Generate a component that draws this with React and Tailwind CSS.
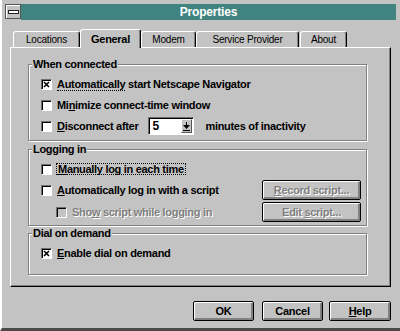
import React from 'react';

const font = "font-['Liberation_Sans',Arial,sans-serif]";
const body = 'text-[11px] font-bold tracking-[-0.3px] leading-[13px] text-black';
const grayText = 'text-[#808080] [text-shadow:1px_1px_0_#fff]';

const CheckBox = ({ checked, disabled }) => (
  <span
    className={`flex h-[11px] w-[11px] shrink-0 items-center justify-center border border-t-[#6f6f6f] border-l-[#6f6f6f] border-r-white border-b-white shadow-[inset_1px_1px_0_#000] ${
      disabled ? 'bg-[#c3c3c3]' : 'bg-white'
    }`}
  >
    {checked && (
      <svg width="7" height="7" viewBox="0 0 7 7">
        <path d="M1 1L6 6M6 1L1 6" stroke="#000" strokeWidth="1.6" />
      </svg>
    )}
  </span>
);

const Check = ({ checked, disabled, children }) => (
  <div className="flex items-center">
    <CheckBox checked={checked} disabled={disabled} />
    <span className={`ml-[5px] ${disabled ? grayText : ''}`}>{children}</span>
  </div>
);

const Group = ({ label, className, children }) => (
  <fieldset
    className={`ml-[17px] w-[339px] border border-[#808080] shadow-[inset_1px_1px_0_#fff,1px_1px_0_#fff] ${className}`}
  >
    <legend className="ml-[3px] bg-[#c3c3c3] px-[1px]">{label}</legend>
    {children}
  </fieldset>
);

const Tab = ({ label, active, className }) => (
  <div
    className={`flex items-center justify-center rounded-t-[3px] border-l border-t border-r border-l-white border-t-white border-r-black shadow-[inset_-1px_0_0_#808080] bg-[#c3c3c3] ${
      active
        ? 'relative z-10 h-[19px] text-[11px] font-bold tracking-[-0.3px]'
        : 'mb-[1px] h-[16px] text-[10px] font-normal tracking-[-0.2px]'
    } ${className}`}
  >
    {label}
  </div>
);

const PushButton = ({ children, disabled, className }) => (
  <div
    className={`flex items-center justify-center rounded-[2px] border border-black bg-[#c3c3c3] shadow-[inset_1px_1px_0_#fff,inset_-2px_-2px_0_#808080] ${
      disabled ? grayText : ''
    } ${className}`}
  >
    {children}
  </div>
);

export default function App() {
  return (
    <div className={`${font} ${body} h-[331px] w-[400px] overflow-hidden border-l-2 border-b-[3px] border-l-white border-b-[#4a4a4a] bg-[#c3c3c3] pt-[4px]`}>
      {/* title bar */}
      <div className="flex h-[16px]">
        <div className="ml-[3px] flex h-[15px] w-[16px] items-center justify-center border border-[#555] bg-[#c3c3c3] shadow-[inset_1px_1px_0_#fff]">
          <span className="h-[4px] w-[11px] border border-[#222] bg-white" />
        </div>
        <div className="flex w-[375px] items-center justify-center bg-[#408480] text-[12px] font-bold tracking-[-0.2px] text-white">
          Properties
        </div>
      </div>

      {/* tabs */}
      <div className="relative z-10 mt-[9px] -mb-px ml-[11px] flex h-[19px] items-end">
        <Tab label="Locations" className="w-[67px]" />
        <Tab label="General" active className="w-[61px]" />
        <Tab label="Modem" className="w-[55px]" />
        <Tab label="Service Provider" className="w-[103px]" />
        <Tab label="About" className="ml-[1px] w-[47px]" />
      </div>

      {/* panel */}
      <div className="ml-[8px] flex h-[240px] w-[381px] flex-col border border-l-white border-t-white border-r-black border-b-black shadow-[inset_-1px_-1px_0_#808080]">
        <Group label="When connected" className="mt-[10px] pt-[5px] pb-[6px]">
          <div className="flex flex-col gap-[5px] pl-[12px]">
            <div className="flex h-[16px] items-center">
              <CheckBox checked />
              <span className="ml-[5px]">
                <span className="border-b border-dotted border-black">Automatically</span> start Netscape Navigator
              </span>
            </div>
            <div className="flex h-[16px] items-center">
              <Check>
                Mi<u>n</u>imize connect-time window
              </Check>
            </div>
            <div className="flex h-[16px] items-center">
              <Check>
                <u>D</u>isconnect after
              </Check>
              <div className="ml-[10px] flex h-[18px] w-[46px] shrink-0 border border-t-[#6f6f6f] border-l-[#6f6f6f] border-r-white border-b-white bg-white shadow-[inset_1px_1px_0_#000]">
                <span className="flex-1 pl-[3px] pt-[2px] text-[12px]">5</span>
                <span className="my-[1px] mr-[1px] flex w-[11px] items-center justify-center border border-l-white border-t-white border-r-[#555] border-b-[#555] bg-[#c3c3c3]">
                  <svg width="7" height="9" viewBox="0 0 7 9">
                    <path d="M3 0h1v3h3L3.5 7 0 3h3z" fill="#000" />
                    <rect x="0" y="8" width="7" height="1" fill="#000" />
                  </svg>
                </span>
              </div>
              <span className="ml-[11px]">minutes of inactivity</span>
            </div>
          </div>
        </Group>

        <Group label="Logging in" className="mt-[2px] pt-[5px] pb-[3px]">
          <div className="flex flex-col pl-[12px] pr-[5px]">
            <div className="flex h-[16px] items-center">
              <CheckBox />
              <span className="ml-[4px] border border-dotted border-black px-[1px] leading-[10px]">
                <u>M</u>anually log in each time
              </span>
            </div>
            <div className="mt-[3px] flex h-[20px] items-center justify-between">
              <Check>
                <u>A</u>utomatically log in with a script
              </Check>
              <PushButton disabled className="h-[20px] w-[99px]">
                <span>
                  <u>R</u>ecord script...
                </span>
              </PushButton>
            </div>
            <div className="mt-[2px] flex h-[20px] items-center justify-between">
              <div className="ml-[15px]">
                <Check disabled>
                  Sho<u>w</u> script while logging in
                </Check>
              </div>
              <PushButton disabled className="h-[20px] w-[99px]">
                <span>
                  Edit <u>s</u>cript...
                </span>
              </PushButton>
            </div>
          </div>
        </Group>

        <Group label="Dial on demand" className="mt-[1px] pt-[5px] pb-[13px]">
          <div className="flex h-[16px] items-center pl-[12px]">
            <Check checked>
              <u>E</u>nable dial on demand
            </Check>
          </div>
        </Group>
      </div>

      {/* bottom buttons */}
      <div className="mt-[14px] flex justify-end pr-[9px]">
        <PushButton className="h-[20px] w-[61px] border-[1.5px]">OK</PushButton>
        <PushButton className="ml-[8px] h-[20px] w-[61px]">Cancel</PushButton>
        <PushButton className="ml-[6px] h-[20px] w-[62px]">
          <span>
            <u>H</u>elp
          </span>
        </PushButton>
      </div>
    </div>
  );
}
